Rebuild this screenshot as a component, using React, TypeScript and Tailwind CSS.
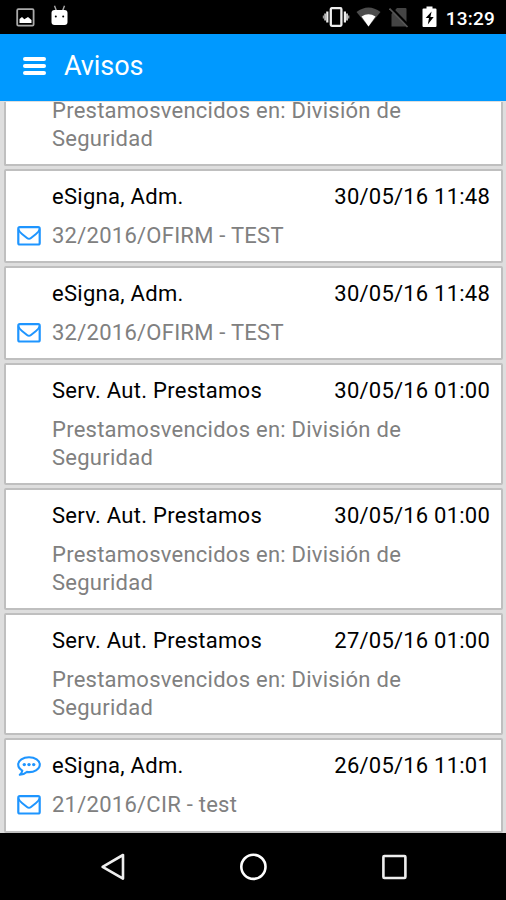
import React from 'react';

interface Notice {
  sender?: string;
  date?: string;
  text: string;
  mail?: boolean;
  comment?: boolean;
  size: string;
}

const loan = 'Prestamosvencidos en: División de Seguridad';

const notices: Notice[] = [
  { text: loan, size: 'h-[64px] mt-px' },
  { sender: 'eSigna, Adm.', date: '30/05/16 11:48', text: '32/2016/OFIRM - TEST', mail: true, size: 'h-[94px]' },
  { sender: 'eSigna, Adm.', date: '30/05/16 11:48', text: '32/2016/OFIRM - TEST', mail: true, size: 'h-[94px]' },
  { sender: 'Serv. Aut. Prestamos', date: '30/05/16 01:00', text: loan, size: 'h-[122px]' },
  { sender: 'Serv. Aut. Prestamos', date: '30/05/16 01:00', text: loan, size: 'h-[122px]' },
  { sender: 'Serv. Aut. Prestamos', date: '27/05/16 01:00', text: loan, size: 'h-[122px]' },
  { sender: 'eSigna, Adm.', date: '26/05/16 11:01', text: '21/2016/CIR - test', mail: true, comment: true, size: 'h-[95px]' },
];

const MailIcon = () => (
  <svg className="w-6 h-5" viewBox="0 0 24 20" fill="none" stroke="#1e95ff" strokeWidth={2.2}>
    <rect x="1.3" y="1.1" width="21.4" height="17.4" rx="1.6" />
    <path d="M1.5 3.6C2 5.6 3.4 6.8 5 8L10 12C11.3 13 12.7 13 14 12L19 8C20.6 6.8 22 5.6 22.5 3.6" strokeWidth={2} />
  </svg>
);

const CommentIcon = () => (
  <svg className="w-6 h-5" viewBox="0 0 24 20" fill="none" stroke="#1e95ff" strokeWidth={2.1} strokeLinejoin="round">
    <path d="M12 1.2C6 1.2 1.2 4.5 1.2 8.6C1.2 11.1 2.8 13.2 5.3 14.6C5 16.4 4.2 17.7 2.8 18.8C5.6 18.5 8 17.6 9.8 15.9C17 16.9 22.8 13.2 22.8 8.6C22.8 4.5 18 1.2 12 1.2Z" />
    <g fill="#1e95ff" stroke="none">
      <circle cx="7.3" cy="8.6" r="1.7" />
      <circle cx="12" cy="8.6" r="1.7" />
      <circle cx="16.7" cy="8.6" r="1.7" />
    </g>
  </svg>
);

const StatusBar = () => (
  <div className="h-[34px] shrink-0 bg-black flex items-center justify-between pl-4 pr-[11px]">
    <div className="flex items-center gap-[16px]">
      <svg width="19" height="19" viewBox="0 0 19 19">
        <rect x="1.2" y="1.2" width="16.4" height="16.4" rx="1.2" fill="none" stroke="#aaa" strokeWidth={1.8} />
        <path d="M3.5 15V11L6 9L8.3 11.2L12 9L15.5 12V15Z" fill="#fff" />
      </svg>
      <svg className="mb-[3px]" width="17" height="21" viewBox="0 0 17 21">
        <path d="M3.5 0.8L5.5 6M13.5 0.8L11.5 6" stroke="#aaa" strokeWidth={1.4} />
        <path d="M0.5 8Q0.5 5 3.5 5H13.5Q16.5 5 16.5 8V17Q16.5 20 13.5 20H3.5Q0.5 20 0.5 17Z" fill="#fff" />
        <circle cx="4.8" cy="11.5" r="1" fill="#000" />
        <circle cx="12.2" cy="11.5" r="1" fill="#000" />
      </svg>
    </div>
    <div className="flex items-center">
      <svg className="mr-[6px]" width="28" height="20" viewBox="0 0 28 20" fill="none" stroke="#eee">
        <rect x="8.8" y="1.2" width="10.6" height="17.6" rx="1" strokeWidth={2.3} />
        <path d="M5.3 4.5V15.5M22.9 4.5V15.5" strokeWidth={2.2} />
        <path d="M3.2 6.5V13.5M25 6.5V13.5" stroke="#bbb" strokeWidth={2} />
        <path d="M1.5 8.5V11.5M26.7 8.5V11.5" stroke="#999" strokeWidth={1.4} />
      </svg>
      <svg className="mr-[8px]" width="25" height="20" viewBox="0 0 25 20">
        <path d="M0.5 5Q12.5-4 24.5 5L12.5 19.5Z" fill="#4d4d4d" />
        <path d="M5.5 9.5Q12.5 5 19.5 9.5L12.5 19.5Z" fill="#fff" />
      </svg>
      <svg className="mr-[13px]" width="20" height="21" viewBox="0 0 20 21">
        <path d="M8 1H16.5Q17.5 1 17.5 2V19.5H2.5V7Z" fill="#444" />
        <path d="M2 0.5L20 19" stroke="#000" strokeWidth={2.4} />
        <path d="M0.5 1.5L18.5 20" stroke="#555" strokeWidth={1.7} />
      </svg>
      <svg className="mr-[9px]" width="15" height="22" viewBox="0 0 15 22">
        <path d="M4.5 0.5H10.5V2.5H13.5Q14.5 2.5 14.5 3.5V20Q14.5 21 13.5 21H1.5Q0.5 21 0.5 20V3.5Q0.5 2.5 1.5 2.5H4.5Z" fill="#fff" />
        <path d="M9.6 5.5L3.7 12H7L5.8 18.5L11.7 11H8.4Z" fill="#000" />
      </svg>
      <span className="text-white text-[19px] leading-none font-medium tracking-[0.2px] pt-[2px]">13:29</span>
    </div>
  </div>
);

const NoticeCard: React.FC<{ notice: Notice }> = ({ notice }) => (
  <div
    className={`${notice.size} shrink-0 bg-white border-[#bfbfbf] pr-[11px] pl-[11px] flex flex-col gap-[11px] ${
      notice.sender ? 'border-2 rounded-[2px] pt-[12px]' : 'border-x-2 border-b-2 rounded-b-[2px] justify-end pb-[11px]'
    }`}
  >
    {notice.sender && (
      <div className="flex items-start">
        <div className="w-[35px] h-[28px] flex items-center shrink-0">{notice.comment && <CommentIcon />}</div>
        <span className="flex-1 text-black tracking-[0.28px]">{notice.sender}</span>
        <span className="text-black">{notice.date}</span>
      </div>
    )}
    <div className="flex items-start">
      <div className="w-[35px] h-[28px] flex items-center shrink-0">{notice.mail && <MailIcon />}</div>
      <p className="w-[375px] text-[#808080] tracking-[0.25px]">{notice.text}</p>
    </div>
  </div>
);

const App: React.FC = () => {
  return (
    <div className="w-[506px] h-[900px] overflow-hidden flex flex-col bg-[#dedede] font-['Roboto',sans-serif]">
      <StatusBar />

      <header className="h-[67px] shrink-0 bg-[#0099ff] flex items-center pl-[23px] pb-[3px] gap-[18px]">
        <div className="w-[23px] mb-px flex flex-col gap-[3px]">
          <div className="h-[4px] rounded-[2px] bg-white" />
          <div className="h-[4px] rounded-[2px] bg-white" />
          <div className="h-[4px] rounded-[2px] bg-white" />
        </div>
        <h1 className="text-white text-[27px] leading-8 tracking-[-0.1px]">Avisos</h1>
      </header>

      {/* List is scrolled, so it is anchored to the bottom */}
      <main className="flex-1 min-h-0 flex flex-col justify-end gap-[3px] pl-1 pr-[3px] text-[22px] leading-[28px] tracking-[0.22px]">
        {notices.map((notice, i) => (
          <NoticeCard key={i} notice={notice} />
        ))}
      </main>

      <nav className="h-[67px] shrink-0 bg-black flex items-center justify-center gap-[114px]">
        <svg width="26" height="28" viewBox="0 0 26 28" fill="none" stroke="#eee" strokeWidth={2.6} strokeLinejoin="round">
          <path d="M24 2V25.6L3.6 13.8Z" />
        </svg>
        <svg width="28" height="28" viewBox="0 0 28 28" fill="none" stroke="#fff" strokeWidth={2.6}>
          <circle cx="14.4" cy="13.8" r="12.1" />
        </svg>
        <svg width="26" height="26" viewBox="0 0 26 26" fill="none" stroke="#eee" strokeWidth={2.6}>
          <rect x="2.4" y="2" width="22" height="22" rx="1" />
        </svg>
      </nav>
    </div>
  );
};

export default App;
